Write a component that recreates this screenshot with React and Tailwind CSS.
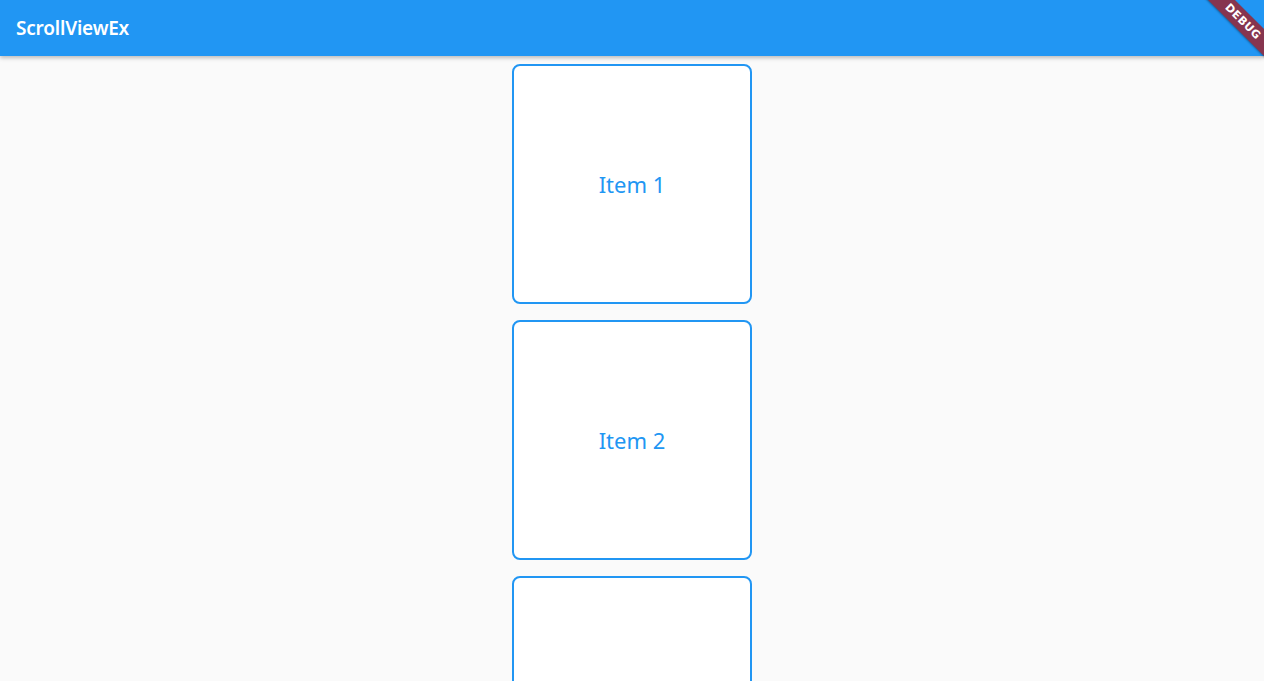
import React from 'react';

const items = ['Item 1', 'Item 2', 'Item 3'];

function DebugBanner() {
  // Flutter-style debug ribbon in the top right corner
  return (
    <div className="pointer-events-none absolute left-[1182px] top-[12px] z-20 flex h-[19px] w-[122px] rotate-45 items-center justify-center bg-[#86354f] shadow-[0_1px_2px_rgba(0,0,0,0.35)]">
      <span
        className="text-[11px] font-extrabold leading-none tracking-[0.4px] text-white"
        style={{ fontFamily: '"DejaVu Sans", sans-serif' }}
      >
        DEBUG
      </span>
    </div>
  );
}

export default function App() {
  return (
    <div
      className="relative flex h-[681px] w-full flex-col overflow-hidden bg-[#fafafa]"
      style={{ fontFamily: '"Noto Sans", "Open Sans", sans-serif' }}
    >
      {/* App bar */}
      <header className="relative z-10 flex h-14 shrink-0 items-center bg-[#2196f3] px-4 shadow-[0_2px_4px_rgba(0,0,0,0.25)]">
        <h1 className="text-[19px] font-semibold tracking-[-0.2px] text-white">ScrollViewEx</h1>
      </header>

      {/* Scroll body */}
      <main className="flex flex-1 flex-col items-center gap-4 overflow-hidden pt-2">
        {items.map((label) => (
          <div
            key={label}
            className="flex h-60 w-60 shrink-0 items-center justify-center rounded-lg border-2 border-[#2196f3] bg-white"
          >
            <span className="text-[22px] text-[#2196f3]">{label}</span>
          </div>
        ))}
      </main>

      <DebugBanner />
    </div>
  );
}
